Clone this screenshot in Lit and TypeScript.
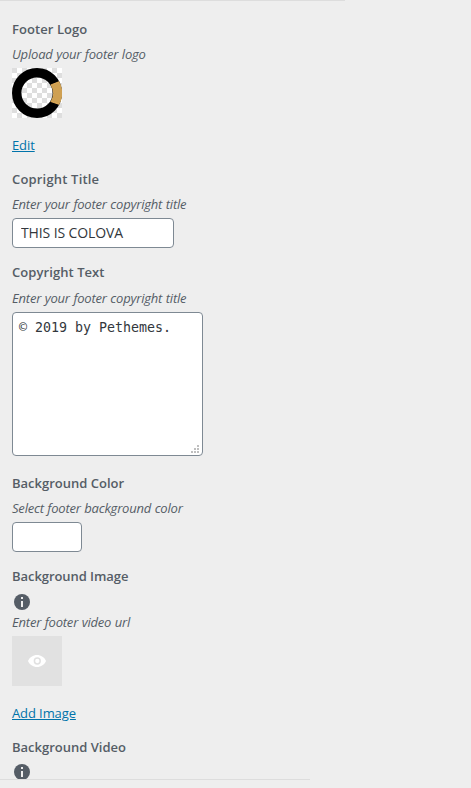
import { LitElement, html, css, svg } from "lit";
import { customElement, property } from "lit/decorators.js";

@customElement("info-icon")
class InfoIcon extends LitElement {
  static styles = css`
    :host { display: block; width: 16px; height: 16px; }
    svg { display: block; }
  `;
  render() {
    return html`<svg width="16" height="16" viewBox="0 0 16 16">
      <circle cx="8" cy="8" r="8" fill="#555d66" />
      <path d="M7 3h2v2H7zM7 7h2v6H7z" fill="#eee" />
    </svg>`;
  }
}

@customElement("footer-logo")
class FooterLogo extends LitElement {
  static styles = css`
    :host { display: block; width: 50px; height: 50px; }
    svg { display: block; }
  `;
  render() {
    return html`<svg width="50" height="50" viewBox="0 0 50 50">
      <defs>
        <pattern id="checks" width="10" height="10" patternUnits="userSpaceOnUse">
          ${svg`<rect width="10" height="10" fill="#fff" /><path d="M0 0h5v5H0zM5 5h5v5H5z" fill="#dedede" />`}
        </pattern>
      </defs>
      <rect width="50" height="50" fill="url(#checks)" />
      <circle cx="25" cy="25" r="20.3" fill="none" stroke="#000" stroke-width="9.4" />
      <path d="M38.600 16.900L47.300 13.400A25 25 0 0 1 47.300 36.600L38.600 33.600A16 16 0 0 0 38.600 16.900Z" fill="#cfa052" />
      <path d="M38.600 17L47.300 13.600M38.600 33.500L47.300 36.400" stroke="#f2b75f" stroke-width="0.800" />
    </svg>`;
  }
}

@customElement("field-text")
class FieldText extends LitElement {
  @property({ reflect: true }) kind = "label";
  static styles = css`
    :host { display: block; height: 20px; font: 600 13px/20px "Open Sans", "Noto Sans", sans-serif; color: #555d66; white-space: nowrap; }
    :host([kind="desc"]) { font-style: italic; font-weight: 400; letter-spacing: -0.2px; word-spacing: 0.4px; }
  `;
  render() {
    return html`<slot></slot>`;
  }
}

@customElement("app-root")
class AppRoot extends LitElement {
  static styles = css`
    :host { display: block; height: 788px; overflow: hidden; background: #eee; font-family: "Open Sans", "Noto Sans", sans-serif; }
    * { box-sizing: border-box; }
    .panel { height: 778px; overflow: hidden; padding-left: 12px; }
    .edge { height: 1px; background: #ddd; }
    .top { width: 345px; }
    .bottom { width: 310px; }
    .field { display: flex; flex-direction: column; align-items: flex-start; }
    .logo { padding-top: 18px; height: 168px; }
    .title { height: 93px; }
    .text { height: 211px; }
    .color { height: 93px; }
    .image { height: 171px; }
    .gap { margin-top: 5px; }
    .open { letter-spacing: 0.18px; }
    .loose { letter-spacing: 0.07px; }
    .tight { letter-spacing: -0.06px; }
    .control { margin-top: 4px; }
    input, textarea { display: block; margin: 4px 0 0; border: 1px solid #7e8993; border-radius: 4px; background: #fff; color: #32373c; outline: none; }
    input { width: 162px; height: 30px; padding: 0 8px 1px; font: 14px "Open Sans", sans-serif; letter-spacing: -0.12px; }
    .swatch { width: 70px; }
    .area { position: relative; }
    textarea { width: 191px; height: 144px; padding: 6px; font: 13.3px/18px "DejaVu Sans Mono", monospace; resize: none; overflow: hidden; }
    .grip { position: absolute; right: 4px; bottom: 3px; }
    .text .gap { margin-top: 6px; }
    .info { margin: 8px 0 0 2px; }
    .info + field-text { margin-top: 2px; }
    .video .info { margin-top: 7px; }
    a { display: block; margin-top: 17px; font-size: 13px; line-height: 20px; letter-spacing: -0.1px; color: #0073aa; text-decoration: underline; }
    .preview { width: 50px; height: 50px; background: #e1e1e1; display: flex; align-items: center; justify-content: center; }
  `;
  render() {
    return html`
      <div class="edge top"></div>
      <div class="panel">
        <section class="field logo">
          <field-text class="loose">Footer Logo</field-text>
          <field-text class="gap" kind="desc">Upload your footer logo</field-text>
          <footer-logo class="control"></footer-logo>
          <a href="#">Edit</a>
        </section>
        <section class="field title">
          <field-text class="open">Copright Title</field-text>
          <field-text class="gap" kind="desc">Enter your footer copyright title</field-text>
          <input type="text" .value=${"THIS IS COLOVA"} />
        </section>
        <section class="field text">
          <field-text class="loose">Copyright Text</field-text>
          <field-text class="gap" kind="desc">Enter your footer copyright title</field-text>
          <div class="area">
            <textarea spellcheck="false" .value=${"© 2019 by Pethemes."}></textarea>
            <svg class="grip" width="8" height="8" viewBox="0 0 8 8">
              <path d="M6 0h2v2H6zM3 3h2v2H3zM6 3h2v2H6zM0 6h2v2H0zM3 6h2v2H3zM6 6h2v2H6z" fill="#bfbfbf" />
            </svg>
          </div>
        </section>
        <section class="field color">
          <field-text>Background Color</field-text>
          <field-text class="gap" kind="desc">Select footer background color</field-text>
          <input class="swatch" type="text" />
        </section>
        <section class="field image">
          <field-text class="tight">Background Image</field-text>
          <info-icon class="info"></info-icon>
          <field-text kind="desc">Enter footer video url</field-text>
          <div class="preview control">
            <svg width="18" height="12" viewBox="0 0 18 12">
              <path fill="#fff" d="M9 0C13 0 16.500 2.500 18 6C16.500 9.500 13 12 9 12C5 12 1.500 9.500 0 6C1.500 2.500 5 0 9 0Z" />
              <circle cx="9.300" cy="6" r="2.900" fill="none" stroke="#e1e1e1" stroke-width="1.500" />
            </svg>
          </div>
          <a href="#">Add Image</a>
        </section>
        <section class="field video">
          <field-text>Background Video</field-text>
          <info-icon class="info"></info-icon>
        </section>
      </div>
      <div class="edge bottom"></div>
    `;
  }
}
